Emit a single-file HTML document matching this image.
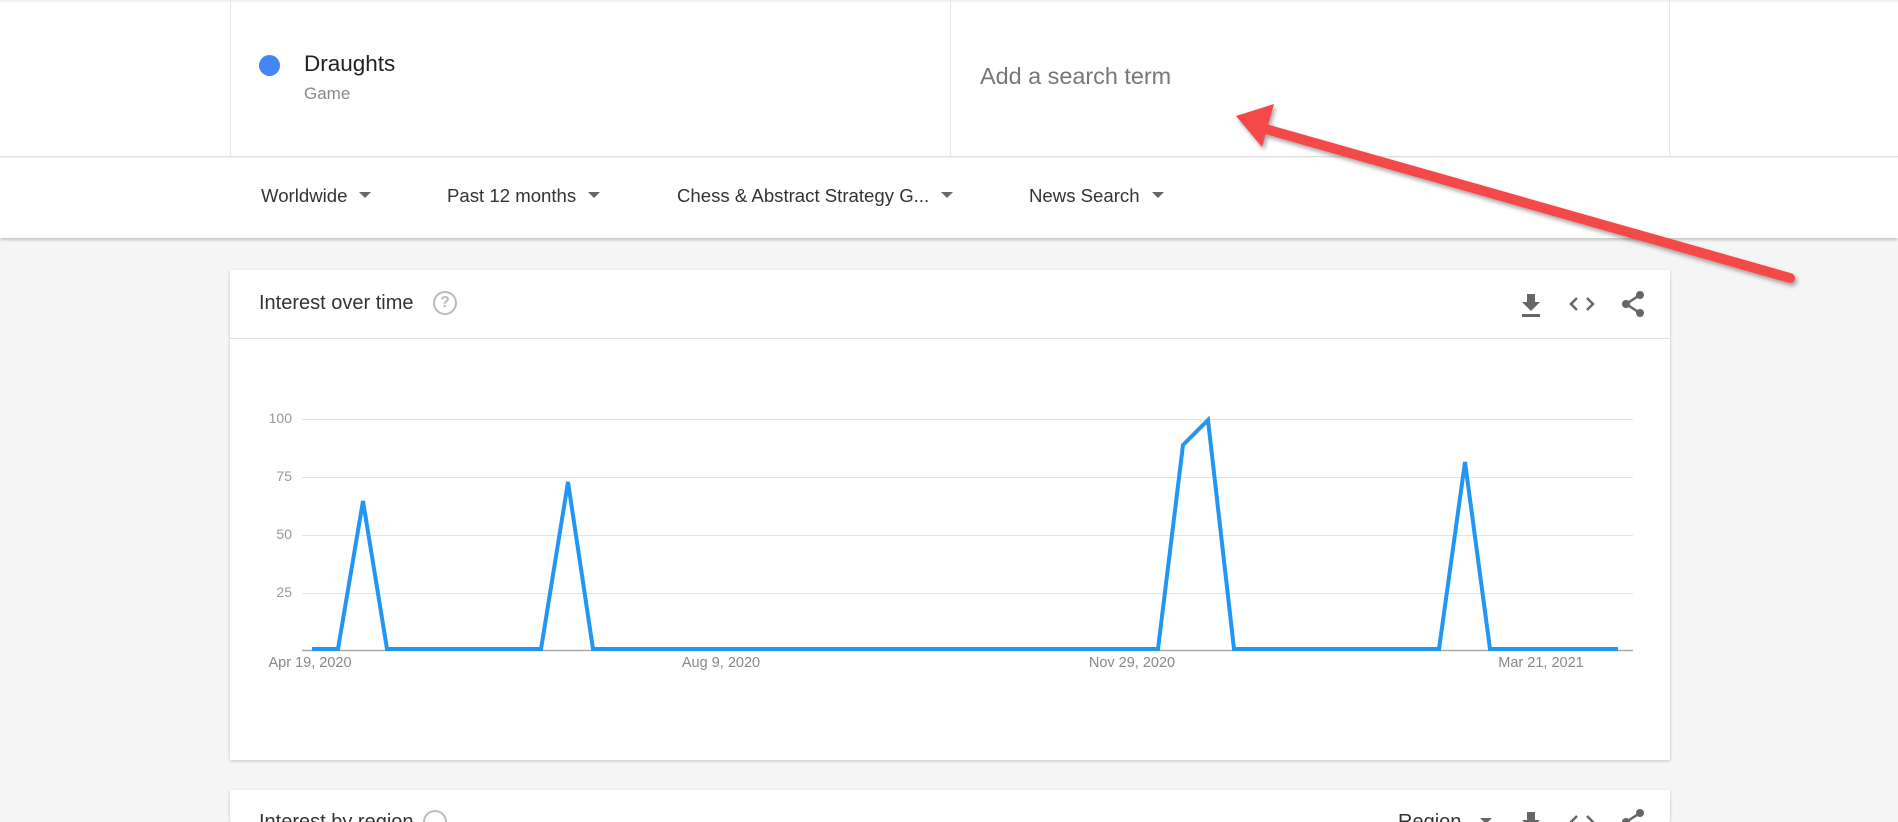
<!DOCTYPE html>
<html><head><meta charset="utf-8"><style>
*{margin:0;padding:0;box-sizing:border-box}
html{width:1898px;height:822px;overflow:hidden}
body{width:1898px;height:822px;overflow:hidden;background:#f5f5f5;font-family:"Liberation Sans",Arial,sans-serif;position:relative}
.abs{position:absolute}
.top{left:0;top:0;width:1898px;height:157px;background:#fff;border-top:2px solid #f0f0f0;border-bottom:1px solid #e0e0e0}
.vl{top:0;width:1px;height:157px;background:#e6e6e6}
.bar{left:0;top:158px;width:1898px;height:80px;background:#fff;box-shadow:0 2px 3px rgba(0,0,0,.2)}
.f{top:185px;font-size:18.6px;color:#333;white-space:nowrap}
.f i{display:inline-block;width:0;height:0;border-left:6px solid transparent;border-right:6px solid transparent;border-top:6px solid #666;margin-left:12px;vertical-align:middle;position:relative;top:-2px}
.card{background:#fff;box-shadow:0 1px 3px rgba(0,0,0,.2);border-radius:2px}
.yl{font-size:14px;color:#999;width:40px;text-align:right;left:252px}
.xl{font-size:14.5px;color:#888;top:655px;white-space:nowrap;transform:translateX(-50%)}
</style></head><body>
<div class="abs top"></div>
<div class="abs vl" style="left:230px"></div>
<div class="abs vl" style="left:950px"></div>
<div class="abs vl" style="left:1669px"></div>
<div class="abs" style="left:259px;top:55px;width:21px;height:21px;border-radius:50%;background:#4285f4"></div>
<div class="abs" style="left:304px;top:51px;font-size:22.5px;color:#222">Draughts</div>
<div class="abs" style="left:304px;top:84px;font-size:17px;color:#888">Game</div>
<div class="abs" style="left:980px;top:63px;font-size:23.4px;color:#777">Add a search term</div>
<div class="abs bar"></div>
<div class="abs f" style="left:261px">Worldwide<i></i></div>
<div class="abs f" style="left:447px">Past 12 months<i></i></div>
<div class="abs f" style="left:677px">Chess &amp; Abstract Strategy G...<i></i></div>
<div class="abs f" style="left:1029px">News Search<i></i></div>

<div class="abs card" style="left:230px;top:270px;width:1440px;height:490px"></div>
<div class="abs" style="left:230px;top:338px;width:1440px;height:1px;background:#e0e0e0"></div>
<div class="abs" style="left:259px;top:292px;font-size:20px;color:#333">Interest over time</div>
<div class="abs" style="left:433px;top:291px;width:24px;height:24px;border:2px solid #bbb;border-radius:50%;color:#bbb;font-size:16px;font-weight:bold;text-align:center;line-height:20px">?</div>
<svg class="abs" style="left:1515px;top:288px" width="140" height="32" viewBox="0 0 140 32">
<path d="M12 6h8v8h5l-9 9-9-9h5z M7 26h18v3H7z" fill="#666"/>
<path d="M62 10l-6 6 6 6 M72 10l6 6-6 6" stroke="#666" stroke-width="2.5" fill="none"/>
<circle cx="125" cy="7" r="4" fill="#666"/><circle cx="125" cy="25" r="4" fill="#666"/><circle cx="111" cy="16" r="4" fill="#666"/>
<path d="M125 7L111 16L125 25" stroke="#666" stroke-width="2.5" fill="none"/>
</svg>
<svg class="abs" style="left:0;top:0" width="1898" height="822">
<g stroke="#e3e3e3" stroke-width="1">
<line x1="302" y1="419.5" x2="1633" y2="419.5"/>
<line x1="302" y1="477.5" x2="1633" y2="477.5"/>
<line x1="302" y1="535.5" x2="1633" y2="535.5"/>
<line x1="302" y1="593.5" x2="1633" y2="593.5"/>
</g>
<line x1="302" y1="650.5" x2="1633" y2="650.5" stroke="#aaa" stroke-width="1.5"/>
<polyline fill="none" stroke="#2196f3" stroke-width="4" stroke-linejoin="miter" points="312,649 338,649 363,501 387,649 541,649 568,482 593,649 1158,649 1183,445 1208,420 1234,649 1439,649 1465,462 1490,649 1618,649"/>
</svg>
<div class="abs yl" style="top:410px">100</div>
<div class="abs yl" style="top:468px">75</div>
<div class="abs yl" style="top:526px">50</div>
<div class="abs yl" style="top:584px">25</div>
<div class="abs xl" style="left:310px">Apr 19, 2020</div>
<div class="abs xl" style="left:721px">Aug 9, 2020</div>
<div class="abs xl" style="left:1132px">Nov 29, 2020</div>
<div class="abs xl" style="left:1541px">Mar 21, 2021</div>

<div class="abs card" style="left:230px;top:790px;width:1440px;height:32px"></div>
<div class="abs" style="left:259px;top:811px;font-size:20px;color:#333">Interest by region</div>
<div class="abs" style="left:423px;top:810px;width:24px;height:24px;border:2px solid #bbb;border-radius:50%"></div>
<div class="abs" style="left:1398px;top:811px;font-size:20px;color:#333">Region</div>
<div class="abs" style="left:1480px;top:818px;border-left:6px solid transparent;border-right:6px solid transparent;border-top:6px solid #666"></div>
<svg class="abs" style="left:1515px;top:806px" width="140" height="16" viewBox="0 0 140 16">
<path d="M12 6h8v8h5l-9 9-9-9h5z" fill="#666"/>
<path d="M62 10l-6 6 6 6 M72 10l6 6-6 6" stroke="#666" stroke-width="2.5" fill="none"/>
<circle cx="125" cy="7" r="4" fill="#666"/><circle cx="111" cy="16" r="4" fill="#666"/>
<path d="M125 7L111 16" stroke="#666" stroke-width="2.5"/>
</svg>

<svg class="abs" style="left:0;top:0" width="1898" height="822">
<defs><filter id="sh"><feDropShadow dx="2" dy="3" stdDeviation="2" flood-color="#000" flood-opacity=".35"/></filter></defs>
<g filter="url(#sh)">
<line x1="1790" y1="278" x2="1262" y2="128" stroke="#f44848" stroke-width="10" stroke-linecap="round"/>
<polygon points="1236,116 1274,104 1262,147" fill="#f44848"/>
</g>
</svg>
</body></html>
